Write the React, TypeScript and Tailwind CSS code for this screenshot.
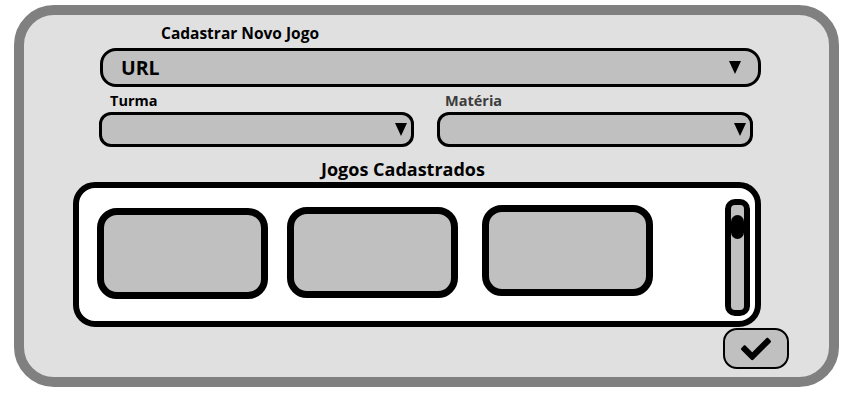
import React from "react";
import { FaCheck } from "react-icons/fa";

const font = { fontFamily: '"Open Sans", "Noto Sans", sans-serif' };

const Arrow = () => (
  <svg width="12" height="13" viewBox="0 0 12 13" className="shrink-0">
    <polygon points="0,0 12,0 6,13" fill="black" />
  </svg>
);

type SelectProps = {
  label: string;
  labelClass: string;
};

const Select = ({ label, labelClass }: SelectProps) => (
  <div className="flex flex-col">
    <div className={`h-[25px] pt-[5px] text-[14.5px] leading-[18px] font-bold ${labelClass}`}>
      {label}
    </div>
    <div className="h-[35px] border-[3px] border-black rounded-[12px] bg-[#c0c0c0] flex items-center justify-end pr-[4px]">
      <Arrow />
    </div>
  </div>
);

const GameCard = ({ className }: { className: string }) => (
  <div className={`w-[171px] h-[91px] border-[7px] border-black rounded-[20px] bg-[#c0c0c0] shrink-0 ${className}`} />
);

const App = () => {
  return (
    <div className="w-[862px] h-[400px] bg-white pt-[5px] pl-[14px]" style={font}>
      <div className="w-[825px] h-[382px] border-[10px] border-[#808080] rounded-[40px] bg-[#e0e0e0] flex flex-col text-black">
        <div className="ml-[137px] mt-[8px] h-[20px] text-[15.5px] leading-[20px] font-bold">
          Cadastrar Novo Jogo
        </div>

        <div className="ml-[76px] mt-[5px] w-[661px] h-[39px] border-[3px] border-black rounded-[16px] bg-[#c0c0c0] flex items-center justify-between pl-[18px] pr-[17px]">
          <span className="text-[19.5px] leading-[24px] font-bold">URL</span>
          <Arrow />
        </div>

        <div className="ml-[75px] grid grid-cols-[315px_316px] gap-x-[23px]">
          <Select label="Turma" labelClass="pl-[11px] text-black" />
          <Select label="Matéria" labelClass="pl-[8px] text-[#3c3c3c]" />
        </div>

        <div className="ml-[297px] mt-[12px] h-[23px] text-[18px] leading-[20px] font-bold">
          Jogos Cadastrados
        </div>

        <div className="ml-[49px] w-[688px] h-[145px] border-[6px] border-black rounded-[22px] bg-white flex items-start">
          <GameCard className="ml-[18px] mt-[20px]" />
          <GameCard className="ml-[19px] mt-[19px]" />
          <GameCard className="ml-[24px] mt-[17px]" />
          <div className="ml-auto mr-[5px] mt-[11px] w-[25px] h-[117px] border-[6px] border-black rounded-[10px] bg-[#c0c0c0] flex flex-col">
            <div className="mt-[10px] h-[24px] w-full rounded-full bg-black" />
          </div>
        </div>

        <div className="ml-[699px] mt-[1px] w-[66px] h-[41px] border-2 border-black rounded-[14px] bg-[#c0c0c0] flex items-center justify-center">
          <FaCheck size={30} />
        </div>
      </div>
    </div>
  );
};

export default App;
